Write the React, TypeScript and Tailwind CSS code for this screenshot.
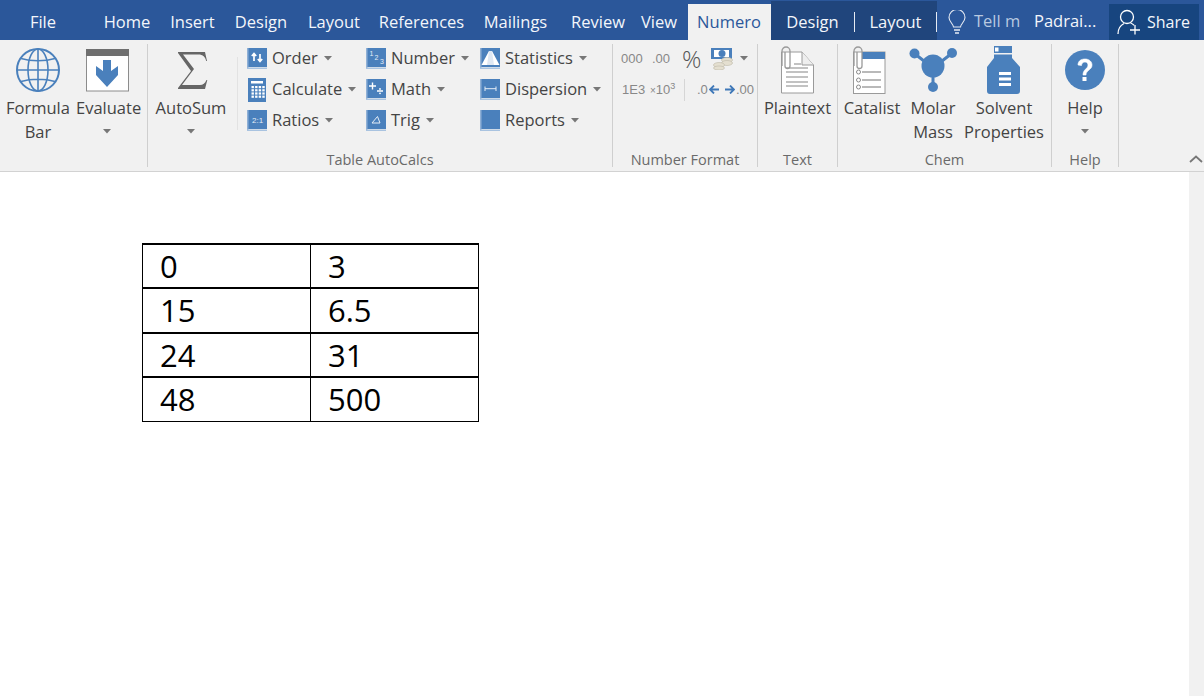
import type { ReactNode } from "react";

const BLUE = "#4a80bc";

function Caret({ className = "" }: { className?: string }) {
  return (
    <svg width="8" height="5" viewBox="0 0 8 5" className={className}>
      <path d="M0 0h8L4 4.500z" fill="#777" />
    </svg>
  );
}

// little blue book used by the small ribbon buttons
function Book({ children }: { children?: ReactNode }) {
  return (
    <svg width="21" height="21" viewBox="0 0 21 21" className="shrink-0">
      <rect x="0" y="0" width="20" height="19" fill={BLUE} />
      <rect x="0" y="0" width="1.500" height="21" fill="#8fb0d6" />
      <rect x="0" y="19.500" width="20" height="1.500" fill="#a9c3e0" />
      {children}
    </svg>
  );
}

function BookDigit({ x, y, size, children }: { x: number; y: number; size: number; children: string }) {
  return (
    <text x={x} y={y} fontSize={size} fill="#e4edf7" fontFamily="Liberation Sans, sans-serif">
      {children}
    </text>
  );
}

function CalcIcon() {
  const cells = [];
  for (let r = 0; r < 4; r++) {
    for (let c = 0; c < 4; c++) {
      cells.push(<rect key={`${r}-${c}`} x={3.500 + c * 3.600} y={8 + r * 3.200} width="2.400" height="2.200" fill="#fff" />);
    }
  }
  return (
    <svg width="19" height="24" viewBox="0 0 19 24" className="shrink-0">
      <rect width="18" height="24" fill={BLUE} />
      <rect x="3" y="3" width="12" height="2.500" fill="#fff" />
      {cells}
    </svg>
  );
}

function SmallButton({ icon, label }: { icon: ReactNode; label: string }) {
  return (
    <div className="flex h-[31px] items-center gap-[5px] whitespace-nowrap">
      <div className="flex w-[20px] justify-center">{icon}</div>
      <span>{label}</span>
      <Caret className="ml-[1px]" />
    </div>
  );
}

function LargeButton({ icon, lines, caret, width }: { icon: ReactNode; lines: string[]; caret?: boolean; width: string }) {
  return (
    <div className={`flex shrink-0 flex-col items-center ${width}`}>
      <div className="flex h-[52px] w-full items-center justify-center">{icon}</div>
      <div className="w-full text-center leading-[24px] whitespace-nowrap">
        {lines.map((l) => (
          <div key={l}>{l}</div>
        ))}
      </div>
      {caret && <Caret className="mt-[9px]" />}
    </div>
  );
}

function Group({ label, width, children }: { label: string; width: string; children: ReactNode }) {
  return (
    <div className={`flex h-[123px] shrink-0 flex-col border-r border-[#cfcfcf] ${width}`}>
      <div className="flex min-h-0 flex-1">{children}</div>
      <div className="h-[18px] pt-[2px] text-center text-[14.500px] leading-[18px] text-[#6a6a6a]">{label}</div>
    </div>
  );
}

function GlobeIcon() {
  return (
    <svg width="44" height="44" viewBox="0 0 44 44" fill="none" stroke={BLUE} strokeWidth="1.600">
      <circle cx="22" cy="22" r="21" strokeWidth="2" />
      <ellipse cx="22" cy="22" rx="10" ry="21" />
      <path d="M22 1v42M1 22h42M5 10.500c10 3 24 3 34 0M5 33.500c10-3 24-3 34 0" />
    </svg>
  );
}

function EvaluateIcon() {
  return (
    <svg width="43" height="43" viewBox="0 0 43 43">
      <rect x=".5" y=".5" width="42" height="41.500" fill="#fff" stroke="#8c8c8c" />
      <rect width="43" height="7" fill="#6f6f6f" />
      <path d="M17 11h8v11l7-5v9L21 38 10 26v-9l7 5z" fill={BLUE} />
    </svg>
  );
}

function SigmaIcon() {
  return (
    <svg width="30" height="37" viewBox="0 0 30 37" className="ml-[3px]">
      <path d="M0 0h27l2 9h-.8c-1-4-3-6.500-8-6.500H5L16 17 4 33h18c3 0 5-1.500 6.500-5h.8L27 37H0v-1l13-17L0 1z" fill="#666" />
    </svg>
  );
}

function Clip() {
  return <path d="M1 20V5a4 4 0 0 1 8 0v15a2.500 2.500 0 0 1-5 0V6" fill="none" stroke="#9a9a9a" strokeWidth="1.300" />;
}

function PlaintextIcon() {
  return (
    <svg width="33" height="48" viewBox="0 0 33 48">
      <path d="M.5 6H21l11.500 13v28H.5z" fill="#fff" stroke="#9a9a9a" />
      <path d="M21 6v13h11.500" fill="#eee" stroke="#9a9a9a" />
      <path d="M13 18h7" stroke="#a8a8a8" strokeWidth="1.400" />
      {[22, 26, 31, 36, 40].map((y) => (
        <path key={y} d={`M5 ${y}H27`} stroke="#a8a8a8" strokeWidth="1.400" />
      ))}
      <Clip />
    </svg>
  );
}

function CatalistIcon() {
  return (
    <svg width="33" height="48" viewBox="0 0 33 48" className="mr-[6px]">
      <rect x=".5" y="6" width="31.500" height="41.500" fill="#fff" stroke="#9a9a9a" />
      <rect x="9" y="6" width="23" height="7" fill={BLUE} />
      {[26, 34, 41].map((y) => (
        <g key={y}>
          <circle cx="5.500" cy={y} r="2" fill="#fff" stroke="#8a8a8a" />
          <path d={`M9 ${y}H28`} stroke="#8a8a8a" strokeWidth="1.200" />
        </g>
      ))}
      <Clip />
    </svg>
  );
}

function MolarIcon() {
  return (
    <svg width="48" height="44" viewBox="0 0 48 44" fill={BLUE}>
      <path d="M6 6 24 20 42 6M24 20v20" stroke={BLUE} strokeWidth="3" fill="none" />
      <circle cx="24" cy="18" r="11.500" />
      <circle cx="5.500" cy="5.500" r="5" />
      <circle cx="43" cy="5" r="5" />
      <circle cx="24" cy="39" r="5" />
    </svg>
  );
}

function BottleIcon() {
  return (
    <svg width="34" height="48" viewBox="0 0 34 48">
      <rect x="7" y="0" width="18" height="7" fill={BLUE} />
      <rect x="8" y="1.500" width="3.500" height="4" fill="#fff" />
      <path d="M7 8.500h18V12l8 9v24a3 3 0 0 1-3 3H3a3 3 0 0 1-3-3V21l7-9z" fill={BLUE} />
      <path d="M12 26h12v3H12zM12 31.500h12v3H12zM12 37h12v3H12z" fill="#fff" />
    </svg>
  );
}

function HelpIcon() {
  return (
    <svg width="40" height="40" viewBox="0 0 40 40">
      <circle cx="20" cy="20" r="20" fill={BLUE} />
      <path d="M13 15c0-4 3-6 7-6s7 2.500 7 6c0 5-6 5-6 10h-3c0-6 5-6 5-10 0-1.500-1-3-3-3s-3.500 1.300-3.500 3.500z" fill="#fff" stroke="#fff" strokeWidth=".6" />
      <rect x="17.500" y="27" width="4" height="4" fill="#fff" />
    </svg>
  );
}

function MoneyIcon() {
  return (
    <svg width="22" height="22" viewBox="0 0 22 22">
      <rect x="0" y="0" width="21" height="11" fill={BLUE} />
      <rect x="3" y="2" width="15" height="7" fill="#fff" />
      <circle cx="11" cy="5.500" r="3.500" fill={BLUE} />
      <ellipse cx="16" cy="12" rx="5.500" ry="2.500" fill="#e4dfd0" stroke="#bdb8a8" strokeWidth=".6" />
      <ellipse cx="16" cy="15" rx="5.500" ry="2.500" fill="#e4dfd0" stroke="#bdb8a8" strokeWidth=".6" />
      <ellipse cx="8" cy="17" rx="5.500" ry="2.500" fill="#e4dfd0" stroke="#bdb8a8" strokeWidth=".6" />
      <ellipse cx="8" cy="20" rx="5.500" ry="2" fill="#e4dfd0" stroke="#bdb8a8" strokeWidth=".6" />
    </svg>
  );
}

function Arrow({ left }: { left?: boolean }) {
  return (
    <svg width="10" height="9" viewBox="0 0 10 9" className={left ? "" : "rotate-180"}>
      <path d="M5 .5 1 4.500l4 4M1 4.500h9" fill="none" stroke="#3f78b8" strokeWidth="1.800" />
    </svg>
  );
}

function Tab({ label, width }: { label: string; width: string }) {
  return <div className={`shrink-0 text-center ${width}`}>{label}</div>;
}

const rows = [
  ["0", "3"],
  ["15", "6.5"],
  ["24", "31"],
  ["48", "500"],
];

export default function App() {
  return (
    <div className="flex h-[696px] w-[1204px] flex-col overflow-hidden bg-white font-['Open_Sans',sans-serif] text-[16.500px] text-[#444]">
      {/* title / tab strip */}
      <div className="flex h-[40px] shrink-0 items-stretch bg-[#2b579a] text-[#f3f6fb]">
        <div className="flex items-center pt-[4px]">
          <Tab label="File" width="w-[86px]" />
          <div className="w-[7px]" />
          <Tab label="Home" width="w-[68px]" />
          <Tab label="Insert" width="w-[63px]" />
          <Tab label="Design" width="w-[74px]" />
          <Tab label="Layout" width="w-[72px]" />
          <Tab label="References" width="w-[103px]" />
          <Tab label="Mailings" width="w-[85px]" />
          <Tab label="Review" width="w-[80px]" />
          <Tab label="View" width="w-[42px]" />
        </div>
        <div className="ml-[8px] mt-[4px] flex w-[83px] items-center justify-center bg-[#f1f1f1] pr-px text-[#2b579a]">Numero</div>
        <div className="mt-px flex w-[166px] items-center bg-[#20457c] pt-[3px]">
          <Tab label="Design" width="w-[83px]" />
          <div className="h-[20px] w-px bg-[#e6ebf3]" />
          <Tab label="Layout" width="w-[81px]" />
          <div className="h-[20px] w-px bg-[#e6ebf3]" />
        </div>
        <div className="flex items-center pt-[3px]">
          <svg width="18" height="24" viewBox="0 0 18 24" fill="none" stroke="#e6ebf3" strokeWidth="1.100" className="ml-[11px]">
            <path d="M5.500 17c0-3-4.500-5-4.500-9.500a8 8 0 0 1 16 0C17 12 12.500 14 12.500 17z" />
            <path d="M6 20h6M7 23h4" strokeWidth="1.500" />
          </svg>
          <span className="ml-[8px] w-[60px] whitespace-nowrap text-[#b9c9e0]">Tell m</span>
          <span className="w-[75px] whitespace-nowrap">Padrai...</span>
        </div>
        <div className="mt-[4px] flex w-[90px] items-center gap-[6px] bg-[#17457f] pl-[8px] text-[16px]">
          <svg width="24" height="26" viewBox="0 0 24 26" fill="none" stroke="#fff" strokeWidth="1.300">
            <circle cx="10" cy="8" r="6.500" />
            <path d="M1 25c0-6 3-9 6-10.500M13.500 14c1.500.5 2.500 1.200 3.500 2.200M18 16v9.500M13 21h10" />
          </svg>
          <span>Share</span>
        </div>
      </div>

      {/* ribbon */}
      <div className="flex h-[132px] shrink-0 border-b border-[#d2d2d2] bg-[#f1f1f1] pt-[4px]">
        <Group label="" width="w-[148px]">
          <LargeButton icon={<GlobeIcon />} lines={["Formula", "Bar"]} width="w-[76px]" />
          <LargeButton icon={<EvaluateIcon />} lines={["Evaluate"]} caret width="w-[62px]" />
        </Group>

        <Group label="Table AutoCalcs" width="w-[465px]">
          <LargeButton icon={<SigmaIcon />} lines={["AutoSum"]} caret width="w-[86px]" />
          <div className="mx-[3px] mt-[13px] h-[73px] w-px bg-[#e2e2e2]" />
          <div className="-mt-px ml-[6px] w-[119px]">
            <SmallButton
              label="Order"
              icon={
                <Book>
                  <path d="M7 13V6M4.800 8 7 5.500 9.200 8M13 6v7M10.800 11l2.200 2.500 2.200-2.500" stroke="#fff" strokeWidth="1.700" fill="none" />
                </Book>
              }
            />
            <SmallButton label="Calculate" icon={<CalcIcon />} />
            <SmallButton
              label="Ratios"
              icon={
                <Book>
                  <BookDigit x={5} y={13} size={8}>2:1</BookDigit>
                </Book>
              }
            />
          </div>
          <div className="-mt-px w-[114px]">
            <SmallButton
              label="Number"
              icon={
                <Book>
                  <BookDigit x={3.500} y={8} size={7}>1</BookDigit>
                  <BookDigit x={8.500} y={11.500} size={7}>2</BookDigit>
                  <BookDigit x={14} y={15.500} size={7}>3</BookDigit>
                </Book>
              }
            />
            <SmallButton
              label="Math"
              icon={
                <Book>
                  <path d="M3 7h7M6.500 3.500v7M11 12h6" stroke="#fff" strokeWidth="1.400" fill="none" />
                  <circle cx="14" cy="10" r=".9" fill="#fff" />
                  <circle cx="14" cy="14.300" r=".9" fill="#fff" />
                </Book>
              }
            />
            <SmallButton
              label="Trig"
              icon={
                <Book>
                  <path d="M6 13 11.500 6.500 14 13z" stroke="#e4edf7" strokeWidth="1" fill="none" />
                </Book>
              }
            />
          </div>
          <div className="-mt-px">
            <SmallButton
              label="Statistics"
              icon={
                <Book>
                  <path d="M1.500 17 9 3h3l7.500 14z" fill="#fff" />
                  <path d="M9 3h3l2 14H7z" fill="#dfe8f3" />
                </Book>
              }
            />
            <SmallButton
              label="Dispersion"
              icon={
                <Book>
                  <path d="M5 7.500v4.500M16 7.500v4.500M5 9.700h11" stroke="#e4edf7" strokeWidth="1" fill="none" />
                </Book>
              }
            />
            <SmallButton label="Reports" icon={<Book />} />
          </div>
        </Group>

        <Group label="Number Format" width="w-[145px]">
          <div className="-mt-px w-full font-['Liberation_Sans',sans-serif] text-[13px] text-[#888]">
            <div className="flex h-[31px] items-center">
              <span className="ml-[8px] w-[31px]">000</span>
              <span className="w-[30px]">.00</span>
              <span className="w-[29px] font-['Open_Sans',sans-serif] text-[24px] leading-none font-light text-[#555]">%</span>
              <MoneyIcon />
              <Caret className="ml-[7px]" />
            </div>
            <div className="flex h-[31px] items-center">
              <span className="ml-[9px] w-[28px]">1E3</span>
              <span className="w-[34px] whitespace-nowrap">
                <span className="text-[10px]">×</span>10<sup className="text-[9px]">3</sup>
              </span>
              <div className="h-[22px] w-px bg-[#d6d6d6]" />
              <span className="ml-[12px] flex w-[28px] items-center gap-px">.0<Arrow left /></span>
              <span className="flex items-center gap-px"><Arrow />.00</span>
            </div>
          </div>
        </Group>

        <Group label="Text" width="w-[80px]">
          <LargeButton icon={<PlaintextIcon />} lines={["Plaintext"]} width="w-[79px]" />
        </Group>

        <Group label="Chem" width="w-[214px]">
          <LargeButton icon={<CatalistIcon />} lines={["Catalist"]} width="w-[68px]" />
          <LargeButton icon={<MolarIcon />} lines={["Molar", "Mass"]} width="w-[54px]" />
          <LargeButton icon={<BottleIcon />} lines={["Solvent", "Properties"]} width="w-[88px]" />
        </Group>

        <Group label="Help" width="w-[67px]">
          <LargeButton icon={<HelpIcon />} lines={["Help"]} caret width="w-[66px]" />
        </Group>

        <div className="flex flex-1 items-end justify-end pb-[8px] pr-[1px]">
          <svg width="14" height="8" viewBox="0 0 14 8" fill="none" stroke="#777" strokeWidth="1.800">
            <path d="M1 7l6-5.500L13 7" />
          </svg>
        </div>
      </div>

      {/* document */}
      <div className="flex min-h-0 flex-1">
        <div className="flex-1 pl-[142px] pt-[71px]">
          <table className="w-[337px] table-fixed border-collapse text-[31px] leading-none text-black">
            <tbody>
              {rows.map((r) => (
                <tr key={r[0]} className="h-[44.250px]">
                  <td className="w-[168px] border border-t-2 border-black pt-px pl-[17px]">{r[0]}</td>
                  <td className="border border-t-2 border-black pt-px pl-[17px]">{r[1]}</td>
                </tr>
              ))}
            </tbody>
          </table>
        </div>
        <div className="w-[15px] bg-[#f1f1f1]" />
      </div>
    </div>
  );
}
